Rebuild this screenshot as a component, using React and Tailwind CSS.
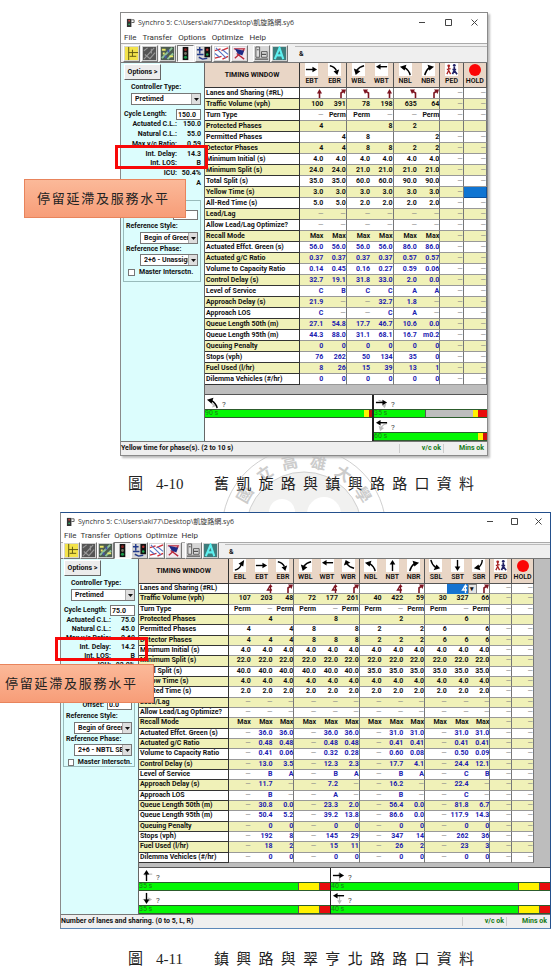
import React from "react";

const D = "—";
const rep = (v, n) => Array(n).fill(v);
const per3 = (...pairs) => pairs.flatMap(([a, b]) => [D, a, b]);

const LABELS = [
  "Lanes and Sharing (#RL)",
  "Traffic Volume (vph)",
  "Turn Type",
  "Protected Phases",
  "Permitted Phases",
  "Detector Phases",
  "Minimum Initial (s)",
  "Minimum Split (s)",
  "Total Split (s)",
  "Yellow Time (s)",
  "All-Red Time (s)",
  "Lead/Lag",
  "Allow Lead/Lag Optimize?",
  "Recall Mode",
  "Actuated Effct. Green (s)",
  "Actuated g/C Ratio",
  "Volume to Capacity Ratio",
  "Control Delay (s)",
  "Level of Service",
  "Approach Delay (s)",
  "Approach LOS",
  "Queue Length 50th (m)",
  "Queue Length 95th (m)",
  "Queuing Penalty",
  "Stops (vph)",
  "Fuel Used (l/hr)",
  "Dilemma Vehicles (#/hr)",
];

const FIRST = {
  id: "a",
  moves: ["EBT", "EBR", "WBL", "WBT", "NBL", "NBR"],
  groupEvery: 2,
  rows: [
    ["@up", "@right", "@left", "@up", "@left", "@right"],
    ["100", "391", "78", "198", "635", "64"],
    [D, "Perm", "Perm", D, D, "Perm"],
    ["4", "", "", "8", "2", ""],
    ["", "4", "8", "", "", "2"],
    ["4", "4", "8", "8", "2", "2"],
    rep("4.0", 6),
    ["24.0", "24.0", "21.0", "21.0", "21.0", "21.0"],
    ["35.0", "35.0", "60.0", "60.0", "90.0", "90.0"],
    rep("3.0", 6),
    ["5.0", "5.0", "2.0", "2.0", "2.0", "2.0"],
    rep(D, 6),
    rep(D, 6),
    rep("Max", 6),
    ["56.0", "56.0", "56.0", "56.0", "86.0", "86.0"],
    ["0.37", "0.37", "0.37", "0.37", "0.57", "0.57"],
    ["0.14", "0.45", "0.16", "0.27", "0.59", "0.06"],
    ["32.7", "19.1", "31.8", "33.0", "2.0", "0.0"],
    ["C", "B", "C", "C", "A", "A"],
    ["21.9", D, D, "32.7", "1.8", D],
    ["C", D, D, "C", "A", D],
    ["27.1", "54.8", "17.7", "46.7", "10.6", "0.0"],
    ["44.3", "88.0", "31.1", "68.1", "16.7", "m0.2"],
    rep("0", 6),
    ["76", "262", "50", "134", "35", "0"],
    ["8", "26", "15", "39", "13", "1"],
    rep("0", 6),
  ],
  cycle: "150.0",
  stats: [
    ["Actuated C.L.:", "150.0"],
    ["Natural C.L.:", "55.0"],
    ["Max v/c Ratio:", "0.59"],
    ["Int. Delay:", "14.3"],
    ["Int. LOS:", "B"],
    ["ICU:", "50.4%"],
    ["ICU LOS:", "A"],
  ],
  offset: "",
  refPhase: "2+6 - Unassigned",
  status: "Yellow time for phase(s). (2 to 10 s)",
  frame: "border-[#8a8a8a] shadow-[2px_2px_2px_#bbbbbb]",
  side: "w-[84px]",
  labelCol: "w-[95px]",
  tablePad: "",
  tableH: "h-[322px]",
  gapH: "h-[9px]",
  titleH: "h-[18px]",
  menuH: "h-[12px]",
  toolH: "h-[20px]",
  menuGap: "gap-[6px]",
  statsH: "h-[68px]",
  groupPos: "mt-[12px] h-[82px] pt-[9px]",
  toolGap: "gap-px",
  ctlW: "w-[26px]",
};

const SECOND = {
  id: "b",
  moves: ["EBL", "EBT", "EBR", "WBL", "WBT", "WBR", "NBL", "NBT", "NBR", "SBL", "SBT", "SBR"],
  groupEvery: 3,
  rows: [
    ["", "@share", "@right", "", "@share", "@right", "", "@share", "@right", "", "@pick", "@right"],
    ["107", "203", "48", "72", "177", "261", "40", "422", "59", "30", "327", "66"],
    [...rep(["Perm", D, "Perm"], 4).flat()],
    ["", "4", "", "", "8", "", "", "2", "", "", "6", ""],
    ["4", "", "4", "8", "", "8", "2", "", "2", "6", "", "6"],
    ["4", "4", "4", "8", "8", "8", "2", "2", "2", "6", "6", "6"],
    rep("4.0", 12),
    rep("22.0", 12),
    [...rep("40.0", 6), ...rep("35.0", 6)],
    rep("4.0", 12),
    rep("2.0", 12),
    rep(D, 12),
    rep(D, 12),
    rep("Max", 12),
    per3(["36.0", "36.0"], ["36.0", "36.0"], ["31.0", "31.0"], ["31.0", "31.0"]),
    per3(["0.48", "0.48"], ["0.48", "0.48"], ["0.41", "0.41"], ["0.41", "0.41"]),
    per3(["0.41", "0.06"], ["0.32", "0.28"], ["0.60", "0.08"], ["0.50", "0.09"]),
    per3(["13.0", "3.5"], ["12.3", "2.3"], ["17.7", "4.1"], ["24.4", "12.1"]),
    per3(["B", "A"], ["B", "A"], ["B", "A"], ["C", "B"]),
    per3(["11.7", D], ["7.2", D], ["16.2", D], ["22.4", D]),
    per3(["B", D], ["A", D], ["B", D], ["C", D]),
    per3(["30.8", "0.0"], ["23.3", "2.0"], ["56.4", "0.0"], ["81.8", "6.7"]),
    per3(["50.4", "5.2"], ["39.2", "13.8"], ["86.6", "0.0"], ["117.9", "14.3"]),
    per3(["0", "0"], ["0", "0"], ["0", "0"], ["0", "0"]),
    per3(["192", "8"], ["145", "29"], ["347", "14"], ["262", "36"]),
    per3(["18", "2"], ["15", "11"], ["26", "2"], ["23", "3"]),
    per3(["0", "0"], ["0", "0"], ["0", "0"], ["0", "0"]),
  ],
  cycle: "75.0",
  stats: [
    ["Actuated C.L.:", "75.0"],
    ["Natural C.L.:", "45.0"],
    ["Max v/c Ratio:", "0.60"],
    ["Int. Delay:", "14.2"],
    ["Int. LOS:", "B"],
    ["ICU:", "82.0%"],
    ["ICU LOS:", "D"],
  ],
  offset: "0.0",
  refPhase: "2+6 - NBTL SBTL",
  status: "Number of lanes and sharing. (0 to 5, L, R)",
  frame: "border-l-[#8a8a8a] border-t-[#24508c] border-r-[#24508c] border-b-[#5b87b8]",
  side: "w-[78px]",
  labelCol: "w-[90px]",
  tablePad: "pr-4",
  tableH: "h-[304px]",
  gapH: "h-[4px]",
  titleH: "h-[16px]",
  menuH: "h-[13px]",
  toolH: "h-[17px]",
  menuGap: "gap-[4px]",
  statsH: "h-[63px]",
  groupPos: "mt-[14px] h-[74px] pt-[6px]",
  toolGap: "",
  ctlW: "w-[24px]",
};

const ARROWS = {
  EBT: ["M1 7H9", "M8 4L13 7L8 10Z"],
  EBR: ["M2 3Q7 4 9 8", "M12 7L10 13L6 9Z"],
  EBL: ["M2 12Q7 11 9 6", "M6 5L12 1L11 8Z"],
  WBL: ["M13 3Q8 4 5 8", "M2 6L4 13L9 9Z"],
  WBT: ["M13 4H5", "M6 1L1 4L6 7Z"],
  WBR: ["M13 10Q8 9 5 5", "M2 7L4 1L9 4Z"],
  NBL: ["M12 13Q11 8 6 5", "M1 4L8 2L6 8Z"],
  NBT: ["M7 13V5", "M4 6L7 1L10 6Z"],
  NBR: ["M3 13Q4 8 8 5", "M13 4L6 2L8 8Z"],
  SBL: ["M2 1Q3 6 7 9", "M12 10L5 12L8 6Z"],
  SBT: ["M7 1V9", "M4 8L7 13L10 8Z"],
  SBR: ["M11 1Q11 6 7 9", "M2 10L9 12L7 6Z"],
};

function MoveIcon({ kind, className = "h-[13px] w-[13px] bg-white", color = "#000" }) {
  return (
    <svg viewBox="0 0 14 14" className={className} aria-hidden="true">
      <path d={ARROWS[kind][0]} stroke={color} strokeWidth="1.5" fill="none" />
      <path d={ARROWS[kind][1]} fill={color} />
    </svg>
  );
}

function PedIcon() {
  return (
    <svg viewBox="0 0 14 14" className="h-[13px] w-[13px] bg-white" aria-hidden="true">
      <circle cx="4" cy="3" r="1.5" fill="#a22" />
      <path d="M4 4V8L2 12M4 8L6 12M2 7L6 6" stroke="#a22" strokeWidth="1.4" fill="none" />
      <circle cx="10" cy="2.5" r="1.5" fill="#226" />
      <path d="M10 4V8L8 12M10 8L13 12M8 7L12 7" stroke="#226" strokeWidth="1.8" fill="none" />
    </svg>
  );
}

function LaneIcon({ kind }) {
  const c = kind === "@pick" ? "#fff" : "#7d1420";
  const cls = "ml-auto h-[9px] w-[7px]";
  if (kind === "@up")
    return (
      <svg viewBox="0 0 7 9" className={cls} aria-hidden="true">
        <path d="M3.5 9V3" stroke={c} strokeWidth="1.6" />
        <path d="M1 4.500L3.5 0L6 4.500Z" fill={c} />
      </svg>
    );
  if (kind === "@right")
    return (
      <svg viewBox="0 0 7 9" className={cls} aria-hidden="true">
        <path d="M2 9V4L4 2.5" stroke={c} strokeWidth="1.6" fill="none" />
        <path d="M2 0.5H7L5.5 5Z" fill={c} />
      </svg>
    );
  if (kind === "@left")
    return (
      <svg viewBox="0 0 7 9" className={cls} aria-hidden="true">
        <path d="M5.5 9V4L3 2.5" stroke={c} strokeWidth="1.6" fill="none" />
        <path d="M5 0.5H0L2 5Z" fill={c} />
      </svg>
    );
  return (
    <svg viewBox="0 0 7 9" className={cls} aria-hidden="true">
      <path d="M4.500 9V2M6 6H1.500L4 2" stroke={c} strokeWidth="1.4" fill="none" />
      <path d="M2.500 3L4.500 0L6.500 3Z" fill={c} />
    </svg>
  );
}

const TOOLS = [
  ["Map", (
    <>
      <rect x="1" y="1" width="14" height="14" fill="#f3e34a" />
      <path d="M5 1V15M5 7H15M9 4V11M6 11H13" stroke="#5c5510" fill="none" />
    </>
  )],
  ["Lanes", (
    <>
      <rect x="1" y="1" width="14" height="14" fill="#555" />
      <path d="M2 14L13 2M2 5L6 2M8 14L14 7M3 9L8 13M10 3V8" stroke="#999" strokeWidth="1.2" fill="none" />
    </>
  )],
  ["Volumes", (
    <>
      <rect x="1" y="1" width="14" height="14" fill="#4d5c50" />
      <path d="M2 13L13 2M8 14L14 8" stroke="#8ec59b" strokeWidth="2" />
      <path d="M2 4H6M10 11H14M3 8H5" stroke="#e8e66a" strokeWidth="2" />
      <path d="M9 4V7M6 10V13" stroke="#45a" strokeWidth="2" />
    </>
  )],
  ["Timing", (
    <>
      <rect x="5" y="1" width="6" height="14" fill="#111" />
      <circle cx="8" cy="4" r="1.500" fill="#822" />
      <circle cx="8" cy="8" r="1.500" fill="#776" />
      <circle cx="8" cy="12" r="1.700" fill="#1c9a4a" />
    </>
  )],
  ["Phasing", (
    <>
      <rect x="9" y="1" width="6" height="11" fill="#111" />
      <circle cx="12" cy="4" r="1.300" fill="#b33" />
      <circle cx="12" cy="9" r="1.300" fill="#2a5" />
      <path d="M1 4H7M4 1V8M1 9H8M3 12L7 14L12 13" stroke="#223a8a" strokeWidth="1.5" fill="none" />
    </>
  )],
  ["Time-Space", (
    <>
      <rect x="1" y="1" width="14" height="14" fill="#fff" />
      <path d="M1 5L7 3M8 5L15 2M1 13L8 11M9 14L15 11" stroke="#d0303a" strokeWidth="1.5" />
      <path d="M2 2L13 13M1 8L6 12M9 4L15 9" stroke="#5574c4" strokeWidth="1.2" />
    </>
  )],
  ["Simulate", (
    <>
      <rect x="1" y="1" width="14" height="14" fill="#f2e9ef" />
      <path d="M2 3H14M3 13L13 4M5 8L13 14" stroke="#b7273a" strokeWidth="1.4" />
      <path d="M3 3L13 5L11 10L6 8Z" fill="#1d2a86" />
    </>
  )],
  ["Reports", (
    <>
      <path d="M2 1H6V12H2ZM8 6H14V12H8Z" fill="#ddd" stroke="#555" />
      <path d="M1 14H15M8 9H13M3 4H5" stroke="#555" strokeWidth="1.300" />
    </>
  )],
  ["Autosize", (
    <>
      <rect x="1" y="1" width="14" height="14" fill="#3e7c7c" />
      <path d="M3 14L8 2L12 14M5 10H11" stroke="#5ef0f0" strokeWidth="2.200" fill="none" />
    </>
  )],
];

function Tool({ index }) {
  const [name, art] = TOOLS[index];
  return (
    <button
      type="button"
      aria-label={name}
      className={
        index === 3
          ? "flex h-[17px] w-[17px] items-center justify-center border border-t-[#777] border-l-[#777] border-r-white border-b-white bg-[#f6f6f6]"
          : "flex h-[17px] w-[17px] items-center justify-center border border-t-white border-l-white border-r-[#777] border-b-[#777] bg-[#d6d6d6]"
      }
    >
      <svg viewBox="0 0 16 16" className="h-[15px] w-[15px]">{art}</svg>
    </button>
  );
}

function Dropdown({ id, value, className }) {
  return (
    <div className={"relative flex h-[12px] border border-[#777] bg-white " + className}>
      <select id={id} defaultValue={value} className="w-full appearance-none overflow-hidden bg-white pr-[9px] pl-[3px] leading-[10px] outline-none">
        <option>{value}</option>
      </select>
      <span className="pointer-events-none absolute inset-y-0 right-0 flex w-[9px] items-center justify-center border-l border-[#aaa] bg-[#dedede]">
        <svg viewBox="0 0 5 3" className="h-[3px] w-[5px]"><path d="M0 0H5L2.500 3Z" fill="#111" /></svg>
      </span>
    </div>
  );
}

function SidePanel({ w }) {
  return (
    <aside className={"flex shrink-0 flex-col border-r border-[#666] bg-[#dcfdfd] pr-[3px] pl-[3px] pt-px font-bold " + w.side}>
      <button type="button" className="h-[16px] w-[37px] border border-t-white border-l-white border-r-[#666] border-b-[#666] bg-[#ececec]">
        Options &gt;
      </button>
      <div className="mt-[2px] pl-[7px]">
        <label htmlFor={w.id + "-type"} className="block leading-[10px]">Controller Type:</label>
        <Dropdown id={w.id + "-type"} value="Pretimed" className="mt-px w-full" />
      </div>
      <div className="mt-[4px] flex items-center justify-between">
        <label htmlFor={w.id + "-cycle"} className="whitespace-nowrap">Cycle Length:</label>
        <input id={w.id + "-cycle"} defaultValue={w.cycle} className="h-[11px] w-[25px] border border-[#777] bg-white pl-px outline-none" />
      </div>
      <dl className={"flex flex-col " + w.statsH}>
        {w.stats.map(([k, v]) => (
          <div key={k} className="flex flex-1 items-center justify-end">
            <dt className="whitespace-nowrap">{k}</dt>
            <dd className="w-[24px] text-right">{v}</dd>
          </div>
        ))}
      </dl>
      <fieldset className={"-ml-px flex min-w-0 flex-col border border-[#9bb] px-[2px] " + w.groupPos}>
        <div className="flex items-center justify-end gap-[3px]">
          <label htmlFor={w.id + "-offset"}>Offset:</label>
          <input id={w.id + "-offset"} defaultValue={w.offset} className="h-[10px] w-[25px] border border-[#777] bg-white pl-px outline-none" />
        </div>
        <label htmlFor={w.id + "-style"} className="whitespace-nowrap leading-[12px]">Reference Style:</label>
        <Dropdown id={w.id + "-style"} value="Begin of Green" className="ml-auto w-[58px]" />
        <label htmlFor={w.id + "-phase"} className="whitespace-nowrap leading-[10px]">Reference Phase:</label>
        <Dropdown id={w.id + "-phase"} value={w.refPhase} className="ml-auto w-[58px]" />
        <label className="flex items-center gap-[4px] pt-px pl-[2px] leading-[10px] whitespace-nowrap">
          <input type="checkbox" className="h-[7px] w-[7px] appearance-none border border-[#777] bg-white" />
          Master Intersctn.
        </label>
      </fieldset>
    </aside>
  );
}

function Cell({ value, row, edge }) {
  const tone = value === D ? "font-normal text-[#888]" : row >= 14 ? "text-[#2020b0]" : "text-[#111]";
  const line = edge ? "border-r border-r-[#777]" : "";
  return (
    <td className={"relative border-b border-b-[#999] p-0 text-right leading-[9px] " + tone + " " + line}>
      {value === "@pick" ? (
        <span className="absolute top-0 left-0 z-10 flex w-[30px]">
          <span className="flex h-[10px] w-[21px] bg-[#1673d0]"><LaneIcon kind="@pick" /></span>
          <select aria-label="Lanes and sharing, SBT" className="h-[10px] w-[9px] appearance-none border border-[#888] bg-[#e4e4e4] text-center outline-none">
            <option>▾</option>
          </select>
        </span>
      ) : value.startsWith("@") ? (
        <LaneIcon kind={value} />
      ) : (
        value
      )}
    </td>
  );
}

function TimingTable({ w }) {
  return (
    <div className={"bg-[#bdbdbd] " + w.tablePad}>
      <table className={"w-full table-fixed border-separate border-spacing-0 font-bold " + w.tableH}>
        <thead>
          <tr className="h-[25px] bg-[#e9d6c6]">
            <th className={"border-r border-b border-[#333] p-0 " + w.labelCol}>TIMING WINDOW</th>
            {w.moves.map((m, i) => (
              <th
                key={m}
                className={
                  (i + 1) % w.groupEvery === 0
                    ? "border-r border-b border-[#555] p-0 align-bottom"
                    : "border-b border-[#555] p-0 align-bottom"
                }
              >
                <div className="flex flex-col items-center">
                  <MoveIcon kind={m} />
                  <span className="leading-[11px] font-semibold">{m}</span>
                </div>
              </th>
            ))}
            <th className="border-r border-b border-[#555] p-0 align-bottom">
              <div className="flex flex-col items-center"><PedIcon /><span className="leading-[11px] font-semibold">PED</span></div>
            </th>
            <th className="border-r border-b border-[#555] p-0 align-bottom">
              <div className="flex flex-col items-center">
                <span className="h-3 w-3 rounded-full bg-[#fb0505]" />
                <span className="leading-[11px] font-semibold">HOLD</span>
              </div>
            </th>
          </tr>
        </thead>
        <tbody>
          {LABELS.map((label, r) => (
            <tr key={label} className={r % 2 ? "bg-[#f0f1b8]" : "bg-white"}>
              <th scope="row" className="border-r border-b border-[#333] p-0 pl-px text-left leading-[9px] whitespace-nowrap">{label}</th>
              {w.rows[r].map((v, i) => (
                <Cell key={i} value={v} row={r} edge={(i + 1) % w.groupEvery === 0} />
              ))}
              <Cell value={r === 3 ? "" : D} row={r} edge />
              {w.id === "a" && r === 9 ? (
                <td className="border-r border-b border-[#0b4f9c] bg-[#0f74d2] p-0" />
              ) : (
                <Cell value={r === 3 ? "" : D} row={r} edge />
              )}
            </tr>
          ))}
        </tbody>
      </table>
      <div className={w.gapH} />
    </div>
  );
}

function Phase({ move, ghost, seconds, children }) {
  return (
    <div>
      <div className="flex h-[14px] items-center pl-px text-[8px] text-[#444]">
        <span className="relative h-[13px] w-[14px]">
          <MoveIcon kind={ghost} className="absolute top-[2px] left-[2px] h-[11px] w-[11px]" color="#bbb" />
          <MoveIcon kind={move} className="absolute top-0 left-0 h-[13px] w-[13px]" />
        </span>
        <span className="self-end pl-[2px] leading-[9px]">?</span>
      </div>
      <div className="flex h-[9px] border-t border-b border-[#2c5c2c] bg-[#04f804] leading-[7px] text-[#1c7a1c]">
        <span className="flex-1">{seconds}</span>
        {children}
      </div>
    </div>
  );
}

function PhasesFirst() {
  return (
    <div className="flex border-t border-[#555] bg-white">
      <div className="w-[169px] border-r-2 border-[#222]">
        <Phase move="NBL" ghost="SBL" seconds="90 s">
          <span className="w-[5px] bg-[#fff200]" />
          <span className="w-[3px] bg-[#c01010]" />
        </Phase>
      </div>
      <div className="flex-1">
        <Phase move="EBT" ghost="EBR" seconds="35 s">
          <span className="w-[48px] border-l border-[#555] bg-[#bdbdbd]" />
          <span className="w-[5px] bg-[#fff200]" />
          <span className="w-[9px] bg-[#e80c0c]" />
        </Phase>
        <Phase move="WBT" ghost="WBL" seconds="60 s">
          <span className="w-[5px] bg-[#fff200]" />
          <span className="w-[4px] bg-[#d01010]" />
        </Phase>
      </div>
    </div>
  );
}

function PhasesSecond() {
  const tail = (
    <>
      <span className="w-[22px] border-x border-[#555] bg-[#fff200]" />
      <span className="w-[10px] bg-[#e80c0c]" />
    </>
  );
  return (
    <div className="flex border-t border-[#555] bg-white">
      <div className="w-[192px] border-r border-[#222]">
        <Phase move="NBT" ghost="WBT" seconds="35 s">{tail}</Phase>
        <Phase move="SBT" ghost="EBT" seconds="35 s">{tail}</Phase>
      </div>
      <div className="flex-1">
        <Phase move="EBT" ghost="NBT" seconds="40 s">{tail}</Phase>
        <Phase move="WBT" ghost="SBT" seconds="40 s">{tail}</Phase>
      </div>
    </div>
  );
}

function SynchroWindow({ w, children }) {
  return (
    <section className={"relative z-10 border bg-[#efefef] font-[Roboto,'Liberation_Sans',sans-serif] text-[7px] leading-[9px] text-[#111] " + w.frame}>
      <header className={"flex items-center bg-white pl-[5px] font-['Open_Sans','Noto_Sans_CJK_TC',sans-serif] text-[7px] text-[#333] " + w.titleH}>
        <svg viewBox="0 0 10 10" className="h-[9px] w-[9px]" aria-hidden="true">
          <path d="M1 1H6V10H1Z" fill="#333" />
          <circle cx="3.500" cy="3" r="1" fill="#c44" />
          <circle cx="3.500" cy="7" r="1" fill="#3a6" />
          <path d="M6 2H9V5H6" stroke="#555" fill="none" />
        </svg>
        <h2 className="flex-1 pl-[3px] whitespace-nowrap">Synchro 5: C:\Users\aki77\Desktop\凱旋路網.sy6</h2>
        {["Minimize", "Maximize", "Close"].map((n) => (
          <button key={n} type="button" aria-label={n} className={"flex justify-center " + w.ctlW}>
            <svg viewBox="0 0 7 7" className="h-[7px] w-[7px]">
              <path
                d={n === "Minimize" ? "M0 3.500H6" : n === "Maximize" ? "M0.500 0.500H6.500V6.500H0.500Z" : "M0.500 0.500L6.500 6.500M6.500 0.500L0.500 6.500"}
                stroke="#444"
                fill="none"
              />
            </svg>
          </button>
        ))}
      </header>
      <nav className={"flex items-center bg-white pl-[3px] text-[8px] text-[#333] " + w.menuH + " " + w.menuGap}>
        {["File", "Transfer", "Options", "Optimize", "Help"].map((m) => (
          <button key={m} type="button">{m}</button>
        ))}
      </nav>
      <div className={"flex items-center border-t border-b border-[#aaa] border-b-[#777] pl-[2px] " + w.toolH + " " + w.toolGap}>
        {[0, 1, 2, 3, 4, 5, 6].map((i) => <Tool key={i} index={i} />)}
        <span className="w-[3px]" />
        {[7, 8].map((i) => <Tool key={i} index={i} />)}
        <span className="ml-[6px] h-[14px] flex-1 border-t border-[#bbb] pl-[4px] leading-[14px] font-bold">&amp;</span>
      </div>
      <div className="flex">
        <SidePanel w={w} />
        <div className="min-w-0 flex-1">
          <TimingTable w={w} />
          {children}
        </div>
      </div>
      <footer className="flex h-[14px] items-center border-t border-[#777] font-bold">
        <span className="flex-1 whitespace-nowrap">{w.status}</span>
        <span className="w-[44px] border-l border-[#ccc] pr-[2px] text-right text-[#157a15]">v/c ok</span>
        <span className="w-[44px] border-l border-[#ccc] pr-[3px] text-right text-[#157a15]">Mins ok</span>
      </footer>
    </section>
  );
}

function Callout({ box, note }) {
  return (
    <>
      <div className={"absolute z-20 h-[24px] w-[93px] border-[3px] border-[#f80808] " + box} />
      <p
        className={
          "absolute z-20 h-[39px] w-[162px] border border-[#e8845c] bg-linear-to-b from-[#fbb999] to-[#f79d78] pr-[17px] pl-[12px] text-justify text-[13px] leading-[37px] text-[#222] [text-align-last:justify] " + note
        }
      >
        停留延滯及服務水平
      </p>
    </>
  );
}

function Caption({ number, text, className }) {
  return (
    <p className={"relative z-10 flex text-[15px] leading-[20px] text-[#222] " + className}>
      <span className="w-[28px]">圖</span>
      <span className="w-[58px]">{number}</span>
      <span className="w-[260px] text-justify [text-align-last:justify]">{text}</span>
    </p>
  );
}

function Seal() {
  const letters = [["國", -59], ["立", -35], ["高", -12], ["雄", 12], ["大", 35], ["學", 59]];
  return (
    <svg viewBox="0 0 168 168" className="absolute top-[446px] left-[220px] h-[168px] w-[168px]" aria-hidden="true">
      <circle cx="84" cy="84" r="82" fill="none" stroke="#d0d0d0" />
      <circle cx="84" cy="84" r="58" fill="#f1f1f0" stroke="#d0d0d0" />
      <circle cx="62" cy="66" r="13" fill="#fff" />
      <circle cx="104" cy="68" r="17" fill="#fff" />
      {letters.map(([c, a]) => (
        <text key={c} x="84" y="21" textAnchor="middle" fontSize="16" fontWeight="bold" fill="#cccccc" transform={`rotate(${a} 84 84)`}>{c}</text>
      ))}
    </svg>
  );
}

export default function App() {
  return (
    <main className="relative w-full overflow-hidden bg-white pt-[12px] font-['Liberation_Serif','Noto_Sans_CJK_TC',serif]">
      <Seal />
      <div className="relative pr-[63px] pl-[120px]">
        <SynchroWindow w={FIRST}><PhasesFirst /></SynchroWindow>
        <Callout box="top-[133px] left-[115px]" note="top-[167px] left-[24px]" />
      </div>
      <Caption number="4-10" text="舊凱旋路與鎮興路路口資料" className="py-[18px] pl-[128px]" />
      <div className="relative pl-[60px]">
        <SynchroWindow w={SECOND}><PhasesSecond /></SynchroWindow>
        <Callout box="top-[125px] left-[55px]" note="top-[152px] left-[-8px]" />
      </div>
      <Caption number="4-11" text="鎮興路與翠亨北路路口資料" className="pt-[20px] pl-[128px]" />
    </main>
  );
}
